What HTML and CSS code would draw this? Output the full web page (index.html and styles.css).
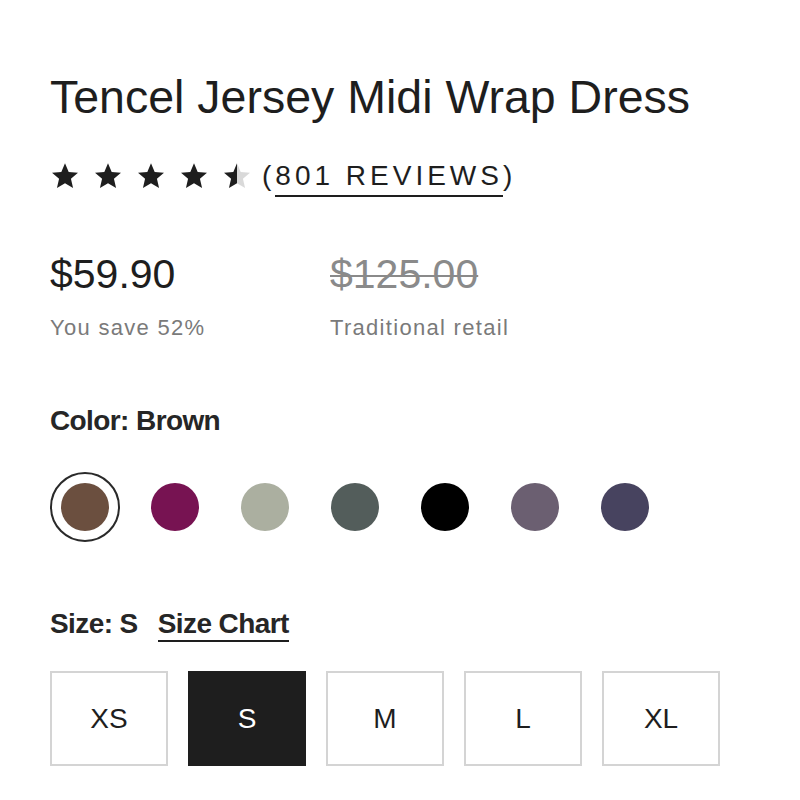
FILE: index.html
```html
<!DOCTYPE html>
<html lang="en">
<head>
<meta charset="utf-8">
<title>Tencel Jersey Midi Wrap Dress</title>
<link rel="stylesheet" href="styles.css">
</head>
<body>
<main class="product">
  <h1 class="title">Tencel Jersey Midi Wrap Dress</h1>

  <div class="rating">
    <div class="stars">
      <svg class="star" viewBox="0 0 24 24"><path d="M12 1.8l2.95 6.9 7.45.65-5.65 4.9 1.7 7.3L12 17.7l-6.45 3.85 1.7-7.3-5.65-4.9 7.45-.65z"/></svg>
      <svg class="star" viewBox="0 0 24 24"><path d="M12 1.8l2.95 6.9 7.45.65-5.65 4.9 1.7 7.3L12 17.7l-6.45 3.85 1.7-7.3-5.65-4.9 7.45-.65z"/></svg>
      <svg class="star" viewBox="0 0 24 24"><path d="M12 1.8l2.95 6.9 7.45.65-5.65 4.9 1.7 7.3L12 17.7l-6.45 3.85 1.7-7.3-5.65-4.9 7.45-.65z"/></svg>
      <svg class="star" viewBox="0 0 24 24"><path d="M12 1.8l2.95 6.9 7.45.65-5.65 4.9 1.7 7.3L12 17.7l-6.45 3.85 1.7-7.3-5.65-4.9 7.45-.65z"/></svg>
      <svg class="star" viewBox="0 0 24 24">
        <defs>
          <linearGradient id="half">
            <stop offset="50%" stop-color="#1e1e1e"/>
            <stop offset="50%" stop-color="#d9d9d9"/>
          </linearGradient>
        </defs>
        <path fill="url(#half)" d="M12 1.8l2.95 6.9 7.45.65-5.65 4.9 1.7 7.3L12 17.7l-6.45 3.85 1.7-7.3-5.65-4.9 7.45-.65z"/>
      </svg>
    </div>
    <a class="reviews" href="#reviews">(<span class="reviews-link">801 REVIEWS</span>)</a>
  </div>

  <div class="prices">
    <div class="price-col">
      <div class="price">$59.90</div>
      <div class="price-note">You save 52%</div>
    </div>
    <div class="price-col">
      <div class="price price-old">$125.00</div>
      <div class="price-note">Traditional retail</div>
    </div>
  </div>

  <div class="option-label">Color: Brown</div>
  <div class="swatches">
    <span class="swatch selected"><span class="dot brown"></span></span>
    <span class="swatch"><span class="dot plum"></span></span>
    <span class="swatch"><span class="dot sage"></span></span>
    <span class="swatch"><span class="dot slate"></span></span>
    <span class="swatch"><span class="dot black"></span></span>
    <span class="swatch"><span class="dot mauve"></span></span>
    <span class="swatch"><span class="dot navy"></span></span>
  </div>

  <div class="option-label size-label">Size: S <a class="size-chart" href="#size-chart">Size Chart</a></div>
  <div class="sizes">
    <button class="size">XS</button>
    <button class="size active">S</button>
    <button class="size">M</button>
    <button class="size">L</button>
    <button class="size">XL</button>
  </div>
</main>
</body>
</html>
```

FILE: styles.css
```css
* {
  box-sizing: border-box;
}

body {
  margin: 0;
  background: #fff;
  color: #222;
  font-family: "Liberation Sans", Arial, sans-serif;
}

.product {
  padding: 70px 0 0 50px;
}

.title {
  margin: 0;
  font-size: 46.5px;
  font-weight: 400;
  line-height: 55px;
  color: #1e1e1e;
}

/* rating row */
.rating {
  display: flex;
  align-items: center;
  height: 36px;
  margin-top: 33px;
}

.stars {
  display: flex;
  gap: 13px;
}

.star {
  width: 30px;
  height: 30px;
  fill: #1e1e1e;
}

.reviews {
  margin-left: 10px;
  font-size: 28px;
  letter-spacing: 4px;
  color: #1e1e1e;
  text-decoration: none;
}

.reviews-link {
  padding-bottom: 4px;
  border-bottom: 2px solid #1e1e1e;
}

/* prices */
.prices {
  display: flex;
  margin-top: 56px;
}

.price-col {
  width: 280px;
}

.price {
  font-size: 41px;
  line-height: 48px;
  color: #1e1e1e;
}

.price-old {
  color: #8a8a8a;
  text-decoration: line-through;
  text-decoration-thickness: 2px;
}

.price-note {
  margin-top: 17px;
  font-size: 22px;
  line-height: 26px;
  letter-spacing: 1.3px;
  color: #7a7a7a;
}

/* options */
.option-label {
  margin-top: 64px;
  font-size: 28px;
  line-height: 32px;
  font-weight: 700;
  letter-spacing: -0.6px;
  color: #262626;
}

.swatches {
  display: flex;
  gap: 20px;
  margin-top: 35px;
}

.swatch {
  display: flex;
  align-items: center;
  justify-content: center;
  width: 70px;
  height: 70px;
  border-radius: 50%;
  border: 2px solid transparent;
}

.swatch.selected {
  border-color: #2a2a2a;
}

.dot {
  width: 48px;
  height: 48px;
  border-radius: 50%;
}

.brown { background: #6b4f3f; }
.plum  { background: #771352; }
.sage  { background: #abafa0; }
.slate { background: #535d5b; }
.black { background: #000; }
.mauve { background: #6b5f71; }
.navy  { background: #47435f; }

.size-label {
  margin-top: 66px;
}

.size-chart {
  margin-left: 13px;
  padding-bottom: 1px;
  color: #262626;
  text-decoration: none;
  border-bottom: 2px solid #1e1e1e;
}

.sizes {
  display: flex;
  gap: 20px;
  margin-top: 31px;
}

.size {
  width: 118px;
  height: 95px;
  padding: 0;
  border: 2px solid #d4d4d4;
  background: #fff;
  color: #1e1e1e;
  font-family: "Liberation Sans", Arial, sans-serif;
  font-size: 28px;
}

.size.active {
  background: #1e1e1e;
  border-color: #1e1e1e;
  color: #fff;
}
```
